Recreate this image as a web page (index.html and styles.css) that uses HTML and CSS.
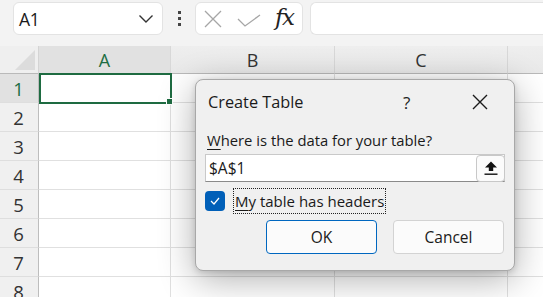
FILE: index.html
```html
<!DOCTYPE html>
<html>
<head>
<meta charset="utf-8">
<link rel="stylesheet" href="styles.css">
</head>
<body>
<div class="toolbar">
  <div class="namebox">
    <span class="nb-text">A1</span>
    <svg class="chev" width="16" height="10" viewBox="0 0 16 10"><path d="M1.5 1.5 L8 8 L14.5 1.5" fill="none" stroke="#333" stroke-width="1.4"/></svg>
  </div>
  <div class="dots"><i></i><i></i><i></i></div>
  <div class="fxbox">
    <svg class="ico-x" width="20" height="20" viewBox="0 0 20 20"><path d="M2 2 L18 18 M18 2 L2 18" stroke="#a6a6a6" stroke-width="1.3" fill="none"/></svg>
    <svg class="ico-check" width="24" height="14" viewBox="0 0 24 14"><path d="M1 5 L8 12 L23 1" stroke="#a6a6a6" stroke-width="1.3" fill="none"/></svg>
    <span class="fx">fx</span>
  </div>
  <div class="formula"></div>
</div>

<div class="sheet">
  <div class="corner"><span class="tri"></span></div>
  <div class="colhead sel">A</div>
  <div class="colhead">B</div>
  <div class="colhead">C</div>
  <div class="colhead last"></div>

  <div class="rowhead sel">1</div>
  <div class="cell a1"><span class="selbox"></span><span class="handle"></span></div>
  <div class="cell"></div><div class="cell"></div><div class="cell last"></div>

  <div class="rowhead">2</div><div class="cell"></div><div class="cell"></div><div class="cell"></div><div class="cell last"></div>
  <div class="rowhead">3</div><div class="cell"></div><div class="cell"></div><div class="cell"></div><div class="cell last"></div>
  <div class="rowhead">4</div><div class="cell"></div><div class="cell"></div><div class="cell"></div><div class="cell last"></div>
  <div class="rowhead">5</div><div class="cell"></div><div class="cell"></div><div class="cell"></div><div class="cell last"></div>
  <div class="rowhead">6</div><div class="cell"></div><div class="cell"></div><div class="cell"></div><div class="cell last"></div>
  <div class="rowhead">7</div><div class="cell"></div><div class="cell"></div><div class="cell"></div><div class="cell last"></div>
  <div class="rowhead">8</div><div class="cell"></div><div class="cell"></div><div class="cell"></div><div class="cell last"></div>
</div>

<div class="dialog">
  <div class="titlebar">
    <span class="title">Create Table</span>
    <span class="help">?</span>
    <svg class="close" width="16" height="16" viewBox="0 0 16 16"><path d="M1 1 L15 15 M15 1 L1 15" stroke="#1a1a1a" stroke-width="1.4" fill="none"/></svg>
  </div>
  <div class="body">
    <div class="label"><u>W</u>here is the data for your table?</div>
    <div class="input">
      <span class="val">$A$1</span>
      <span class="collapse">
        <svg width="16" height="16" viewBox="0 0 16 16"><path d="M8 1.5 L14 7.5 L10.2 7.5 L10.2 11 L5.8 11 L5.8 7.5 L2 7.5 Z" fill="#111"/><rect x="1.5" y="13.5" width="13" height="1.4" fill="#111"/></svg>
      </span>
    </div>
    <div class="checkrow">
      <span class="checkbox">
        <svg width="10" height="8" viewBox="0 0 10 8"><path d="M1 4 L4 7 L9 1" stroke="#fff" stroke-width="1.2" fill="none"/></svg>
      </span>
      <span class="cblabel"><u>M</u>y table has headers</span>
    </div>
    <div class="buttons">
      <button class="btn primary">OK</button>
      <button class="btn">Cancel</button>
    </div>
  </div>
</div>
</body>
</html>
```
FILE: styles.css
```css
* { box-sizing: border-box; }
html, body { margin: 0; padding: 0; }
body {
  width: 543px; height: 297px; overflow: hidden;
  background: #ffffff;
  font-family: "Open Sans", "Noto Sans", sans-serif;
  color: #1b1b1b;
  position: relative;
}

.toolbar {
  height: 46px;
  background: #f3f3f3;
  display: flex;
  align-items: flex-start;
  padding-top: 2px;
  padding-left: 13px;
}
.namebox {
  width: 150px; height: 33px;
  background: #fff;
  border: 1px solid #e3e3e3;
  border-radius: 6px;
  display: flex; align-items: center; justify-content: space-between;
  padding: 0 8px 0 5px;
}
.nb-text { font-size: 17.5px; letter-spacing: -0.3px; color: #1a1a1a; }
.chev { margin-top: 1px; }
.dots {
  width: 32px; height: 33px;
  display: flex; flex-direction: column; align-items: center; justify-content: center; gap: 3px;
}
.dots i { display: block; width: 3px; height: 3px; background: #444; }
.fxbox {
  width: 108px; height: 33px;
  background: #fff;
  border: 1px solid #e3e3e3;
  border-radius: 6px;
  display: flex; align-items: center;
  padding-left: 7px;
}
.ico-x { margin-right: 14px; }
.ico-check { margin-right: 14px; margin-top: 4px; }
.fx {
  font-family: "DejaVu Serif", "Liberation Serif", serif;
  font-style: italic; font-size: 23px; color: #222; letter-spacing: -1.5px;
  margin-top: -4px;
}
.formula {
  margin-left: 7px;
  flex: 1; height: 33px;
  background: #fff;
  border: 1px solid #e3e3e3;
  border-right: none;
  border-radius: 6px 0 0 6px;
}

.sheet {
  display: grid;
  grid-template-columns: 39px 132px 164px 173px 1fr;
  grid-template-rows: 28px repeat(8, 29px);
}
.corner {
  background: #efefef;
  border-right: 1px solid #d4d4d4;
  border-bottom: 1px solid #b9b9b9;
  position: relative;
}
.tri {
  position: absolute; right: 3px; bottom: 3px;
  width: 0; height: 0;
  border-left: 20px solid transparent;
  border-bottom: 20px solid #dcdcdc;
}
.colhead {
  background: linear-gradient(#eeeeee, #e9e9e9);
  border-right: 1px solid #d8d8d8;
  border-bottom: 1px solid #b9b9b9;
  display: flex; align-items: center; justify-content: center;
  font-size: 18px; color: #333;
  padding-top: 1px;
}
.colhead.sel { background: #e1e1e1; color: #1d6d43; }
.colhead.last { border-right: none; }
.rowhead {
  background: #f0f0f0;
  border-right: 1px solid #bdbdbd;
  border-bottom: 1px solid #dedede;
  display: flex; align-items: center; justify-content: center;
  font-size: 18.5px; color: #333;
  padding-right: 1px;
}
.rowhead.sel { background: #e1e1e1; color: #1d6d43; }
.cell {
  border-right: 1px solid #e0e0e0;
  border-bottom: 1px solid #e0e0e0;
}
.cell.last { border-right: none; }
.a1 { position: relative; }
.selbox {
  position: absolute; left: 0; top: -1px; right: -2px; bottom: -2px;
  border: 2px solid #1e6b41;
}
.handle {
  position: absolute; right: -3px; bottom: -3px;
  width: 7px; height: 7px;
  background: #1e6b41;
  border: 1px solid #fff;
}

.dialog {
  position: absolute;
  left: 195px; top: 79px;
  width: 320px; height: 192px;
  background: #f0f0f0;
  border: 1px solid #a8a8a8;
  border-radius: 8px;
  box-shadow: 0 8px 36px rgba(0,0,0,0.32), 0 2px 6px rgba(0,0,0,0.14);
}
.titlebar {
  height: 44px;
  display: flex; align-items: center;
  padding-left: 12px;
}
.title { font-size: 16.3px; flex: 1; color: #1a1a1a; margin-top: -1px; }
.help { font-size: 17px; width: 14px; margin-right: 55px; color: #222; }
.close { margin-right: 26px; }
.body { padding: 0 9px 0 9px; }
.label { font-size: 14.8px; height: 30px; padding-top: 6px; padding-left: 2px; line-height: 20px; color: #1a1a1a; }
.label u, .cblabel u { text-underline-offset: 3px; }
.input {
  height: 28px; width: 300px;
  background: #fff;
  border: 1px solid #c9c9c9;
  border-bottom-color: #8a8a8a;
  display: flex; align-items: center; justify-content: space-between;
  padding-left: 3px;
}
.val { font-size: 15.5px; color: #1a1a1a; }
.collapse {
  width: 29px; height: 27px;
  border: 1px solid #c8c8c8;
  border-radius: 4px;
  background: #fbfbfb;
  display: flex; align-items: center; justify-content: center;
  margin-right: -1px;
}
.checkrow {
  margin-top: 6px;
  display: flex; align-items: center;
  height: 26px;
}
.checkbox {
  width: 20px; height: 20px;
  background: #005fb8;
  border-radius: 4px;
  display: flex; align-items: center; justify-content: center;
}
.cblabel {
  margin-left: 8px;
  font-size: 15px;
  color: #1a1a1a;
  border: 1px dotted #222;
  height: 26px; line-height: 24px;
  padding: 0 1px;
}
.buttons {
  margin-top: 6px;
  display: flex; justify-content: flex-end; gap: 16px;
  padding-right: 1px;
}
.btn {
  width: 111px; height: 34px;
  background: #fbfbfb;
  border: 1px solid #d3d3d3;
  border-radius: 4px;
  font-family: "Open Sans", "Noto Sans", sans-serif;
  font-size: 15.5px; color: #1a1a1a;
  padding: 0;
}
.btn.primary { border: 1.5px solid #0067c0; }
```
